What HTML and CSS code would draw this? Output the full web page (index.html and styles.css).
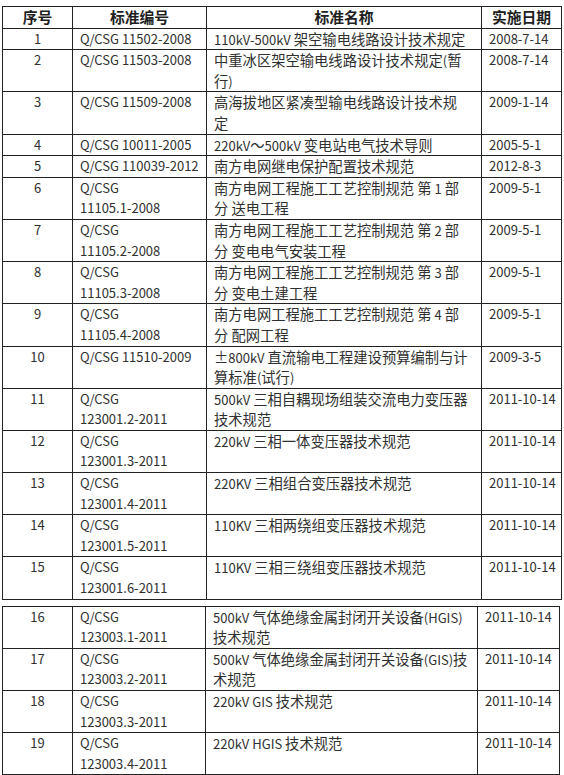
FILE: index.html
```html
<!DOCTYPE html>
<html lang="zh-CN">
<head>
<meta charset="utf-8">
<title>标准列表</title>
<link rel="stylesheet" href="styles.css">
</head>
<body>
<table class="std std-a">
  <colgroup>
    <col class="c-no"><col class="c-code"><col class="c-name"><col class="c-date">
  </colgroup>
  <thead>
    <tr><th>序号</th><th>标准编号</th><th>标准名称</th><th>实施日期</th></tr>
  </thead>
  <tbody>
    <tr><td class="no">1</td><td class="code">Q/CSG 11502-2008</td><td><span class="lt">110kV-500kV </span>架空输电线路设计技术规定</td><td class="date">2008-7-14</td></tr>
    <tr><td class="no">2</td><td class="code">Q/CSG 11503-2008</td><td>中重冰区架空输电线路设计技术规定<span class="lt">(</span>暂<br>行<span class="lt">)</span></td><td class="date">2008-7-14</td></tr>
    <tr><td class="no">3</td><td class="code">Q/CSG 11509-2008</td><td>高海拔地区紧凑型输电线路设计技术规<br>定</td><td class="date">2009-1-14</td></tr>
    <tr><td class="no">4</td><td class="code">Q/CSG 10011-2005</td><td><span class="lt">220kV</span>～<span class="lt">500kV </span>变电站电气技术导则</td><td class="date">2005-5-1</td></tr>
    <tr><td class="no">5</td><td class="code">Q/CSG 110039-2012</td><td>南方电网继电保护配置技术规范</td><td class="date">2012-8-3</td></tr>
    <tr><td class="no">6</td><td class="code">Q/CSG<br>11105.1-2008</td><td>南方电网工程施工工艺控制规范 第<span class="lt"> 1 </span>部<br>分 送电工程</td><td class="date">2009-5-1</td></tr>
    <tr><td class="no">7</td><td class="code">Q/CSG<br>11105.2-2008</td><td>南方电网工程施工工艺控制规范 第<span class="lt"> 2 </span>部<br>分 变电电气安装工程</td><td class="date">2009-5-1</td></tr>
    <tr><td class="no">8</td><td class="code">Q/CSG<br>11105.3-2008</td><td>南方电网工程施工工艺控制规范 第<span class="lt"> 3 </span>部<br>分 变电土建工程</td><td class="date">2009-5-1</td></tr>
    <tr><td class="no">9</td><td class="code">Q/CSG<br>11105.4-2008</td><td>南方电网工程施工工艺控制规范 第<span class="lt"> 4 </span>部<br>分 配网工程</td><td class="date">2009-5-1</td></tr>
    <tr><td class="no">10</td><td class="code">Q/CSG 11510-2009</td><td>±<span class="lt">800kV </span>直流输电工程建设预算编制与计<br>算标准<span class="lt">(</span>试行<span class="lt">)</span></td><td class="date">2009-3-5</td></tr>
    <tr><td class="no">11</td><td class="code">Q/CSG<br>123001.2-2011</td><td><span class="lt">500kV </span>三相自耦现场组装交流电力变压器<br>技术规范</td><td class="date">2011-10-14</td></tr>
    <tr><td class="no">12</td><td class="code">Q/CSG<br>123001.3-2011</td><td><span class="lt">220kV </span>三相一体变压器技术规范</td><td class="date">2011-10-14</td></tr>
    <tr><td class="no">13</td><td class="code">Q/CSG<br>123001.4-2011</td><td><span class="lt">220KV </span>三相组合变压器技术规范</td><td class="date">2011-10-14</td></tr>
    <tr><td class="no">14</td><td class="code">Q/CSG<br>123001.5-2011</td><td><span class="lt">110KV </span>三相两绕组变压器技术规范</td><td class="date">2011-10-14</td></tr>
    <tr><td class="no">15</td><td class="code">Q/CSG<br>123001.6-2011</td><td><span class="lt">110KV </span>三相三绕组变压器技术规范</td><td class="date">2011-10-14</td></tr>
  </tbody>
</table>
<table class="std std-b">
  <colgroup>
    <col class="c-no"><col class="c-code2"><col class="c-name2"><col class="c-date2">
  </colgroup>
  <tbody>
    <tr><td class="no">16</td><td class="code">Q/CSG<br>123003.1-2011</td><td><span class="lt">500kV </span>气体绝缘金属封闭开关设备<span class="lt">(HGIS)</span><br>技术规范</td><td class="date">2011-10-14</td></tr>
    <tr><td class="no">17</td><td class="code">Q/CSG<br>123003.2-2011</td><td><span class="lt">500kV </span>气体绝缘金属封闭开关设备<span class="lt">(GIS)</span>技<br>术规范</td><td class="date">2011-10-14</td></tr>
    <tr><td class="no">18</td><td class="code">Q/CSG<br>123003.3-2011</td><td><span class="lt">220kV GIS </span>技术规范</td><td class="date">2011-10-14</td></tr>
    <tr><td class="no">19</td><td class="code">Q/CSG<br>123003.4-2011</td><td><span class="lt">220kV HGIS </span>技术规范</td><td class="date">2011-10-14</td></tr>
  </tbody>
</table>
</body>
</html>
```

FILE: styles.css
```css
html, body {
  margin: 0;
  padding: 0;
  background: #ffffff;
}

body {
  padding: 6px 0 0 2px;
  font-family: "Noto Sans CJK SC", "Noto Sans", sans-serif;
  font-size: 14.3px;
  color: #303030;
}

.std {
  border-collapse: collapse;
  table-layout: fixed;
}

.std-a {
  width: 559px;
}

.std-b {
  width: 557px;
  margin-top: 6px;
}

.c-no { width: 70px; }
.c-code { width: 134px; }
.c-name { width: 275px; }
.c-date { width: 80px; }
.c-code2 { width: 133px; }
.c-name2 { width: 272px; }
.c-date2 { width: 82px; }

.std th,
.std td {
  border: 1px solid #222222;
  padding: 0 7px;
  line-height: 20.6px;
  vertical-align: top;
  text-align: left;
  white-space: nowrap;
  overflow: hidden;
}

.std th {
  font-weight: 700;
  font-size: 14.8px;
  text-align: center;
  color: #1e1e1e;
}

.std td.no,
.std td.code,
.std td.date,
.std .lt {
  font-size: 13px;
}

.std .lt {
  line-height: 1;
}

.std td.no {
  text-align: center;
}

.std td.date {
  padding-left: 7px;
}
```
